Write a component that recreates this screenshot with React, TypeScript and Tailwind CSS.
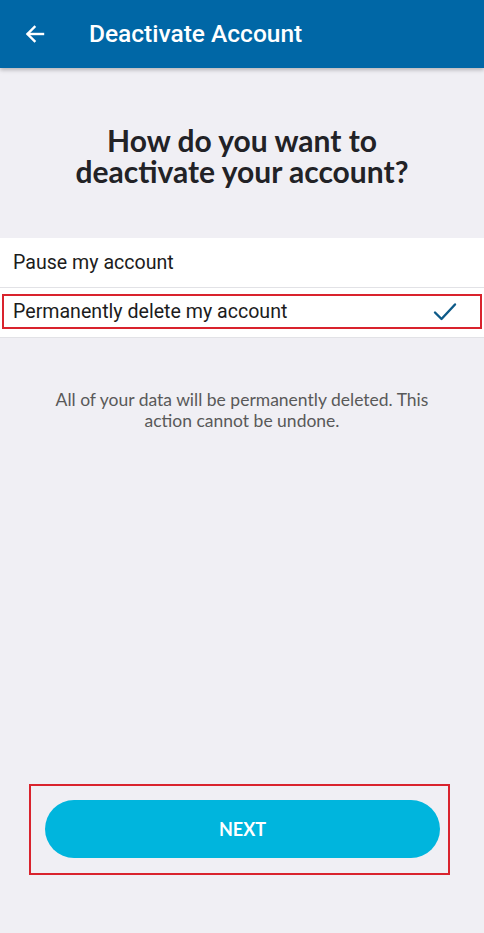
import React from 'react';

const ArrowLeft = () => (
  <svg width="24" height="24" viewBox="0 0 24 24" fill="none" stroke="white" strokeWidth="2.4" strokeLinecap="square">
    <path d="M20 12H5" />
    <path d="M11.5 5L4.5 12l7 7" />
  </svg>
);

const Check = () => (
  <svg width="24" height="20" viewBox="0 0 24 20" fill="none" stroke="#0d5a88" strokeWidth="2.4" strokeLinecap="round" strokeLinejoin="round">
    <path d="M2 10.5l6.5 6.5L22 2.5" />
  </svg>
);

export default function App() {
  return (
    <div className="min-h-screen bg-[#f0eff4] flex flex-col">
      {/* Toolbar */}
      <div className="h-[68px] bg-[#0067a6] flex items-center shadow-[0_2px_4px_rgba(0,0,0,0.25)] relative">
        <div className="pl-[23px] w-[89px] flex items-center">
          <ArrowLeft />
        </div>
        <h1 className="text-white text-[24.5px] font-medium font-['Roboto',sans-serif]">
          Deactivate Account
        </h1>
      </div>

      {/* Question */}
      <h2 className="mt-[57px] text-center text-[30px] leading-[31px] font-bold text-[#222226] font-['Lato',sans-serif]">
        How do you want to
        <br />
        deactivate your account?
      </h2>

      {/* Options */}
      <div className="mt-[51px] bg-white font-['Roboto',sans-serif] text-[19.6px] text-[#1c1c1c]">
        <div className="h-[50px] flex items-center px-[13px] border-b border-[#e2e2e6]">
          Pause my account
        </div>
        <div className="h-[50px] pt-[6px] pb-[8px] px-[2px] border-b border-[#e2e2e6]">
          <div className="h-full border-2 border-[#d9232d] flex items-center justify-between pl-[9px] pr-[23px]">
            <span>Permanently delete my account</span>
            <Check />
          </div>
        </div>
      </div>

      {/* Description */}
      <p className="mt-[51px] px-[40px] text-center text-[17.5px] leading-[21px] text-[#595959] font-['Lato',sans-serif]">
        All of your data will be permanently deleted. This
        <br />
        action cannot be undone.
      </p>

      {/* Button */}
      <div className="mt-auto mb-[58px] ml-[29px] w-[421px] border-2 border-[#d9232d] pt-[14px] pb-[15px] pl-[14px] pr-[8px]">
        <button className="w-[395px] h-[58px] rounded-full bg-[#00b5dd] text-white font-bold text-[18px] font-['Lato',sans-serif]">
          NEXT
        </button>
      </div>
    </div>
  );
}
